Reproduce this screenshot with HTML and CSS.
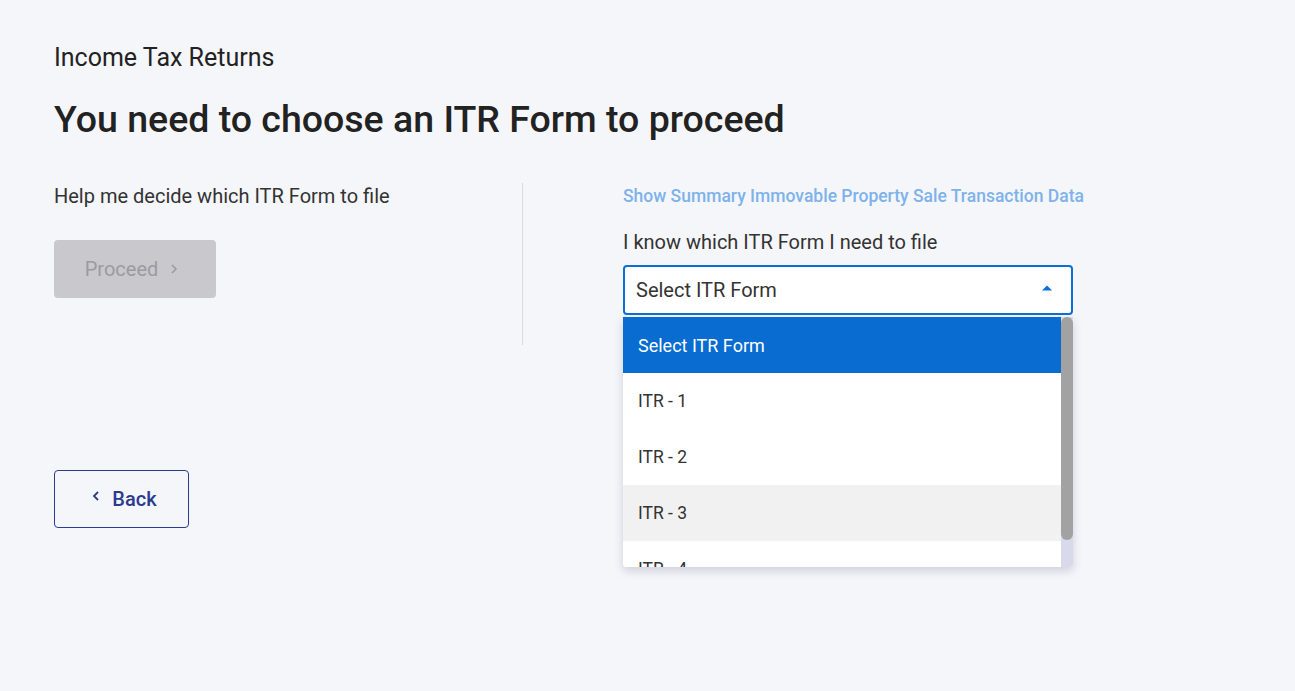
FILE: index.html
```html
<!DOCTYPE html>
<html lang="en">
<head>
<meta charset="utf-8">
<title>Income Tax Returns</title>
<link rel="stylesheet" href="styles.css">
</head>
<body>
<main class="page">
  <div class="crumb">Income Tax Returns</div>
  <h1 class="title">You need to choose an ITR Form to proceed</h1>
  <div class="choices">
    <section class="col-left">
      <p class="col-text">Help me decide which ITR Form to file</p>
      <button class="btn-proceed" disabled>Proceed <span class="chev">
        <svg width="8" height="12" viewBox="0 0 8 12"><path d="M2 2l4 4-4 4" fill="none" stroke="currentColor" stroke-width="1.6"/></svg>
      </span></button>
    </section>
    <section class="col-right">
      <a class="summary-link" href="#">Show Summary Immovable Property Sale Transaction Data</a>
      <label class="field-label">I know which ITR Form I need to file</label>
      <div class="select-wrap">
        <div class="select-box">
          <span>Select ITR Form</span>
          <svg class="caret" width="12" height="8" viewBox="0 0 12 8"><path d="M1 6.5L6 1.5L11 6.5Z" fill="#0a6fd8"/></svg>
        </div>
        <div class="menu">
          <ul class="options">
            <li class="opt selected">Select ITR Form</li>
            <li class="opt">ITR - 1</li>
            <li class="opt">ITR - 2</li>
            <li class="opt hover">ITR - 3</li>
            <li class="opt">ITR - 4</li>
          </ul>
          <div class="scroll"><div class="thumb"></div></div>
        </div>
      </div>
    </section>
  </div>
  <button class="btn-back"><span class="chev-back">
    <svg width="8" height="12" viewBox="0 0 8 12"><path d="M6 2L2 6l4 4" fill="none" stroke="currentColor" stroke-width="1.8"/></svg>
  </span>Back</button>
</main>
</body>
</html>
```

FILE: styles.css
```css
* { box-sizing: border-box; }
html, body { margin: 0; padding: 0; }
body {
  background: #f5f6fa;
  font-family: Roboto, "Liberation Sans", sans-serif;
  color: #2a2a2a;
  width: 1295px;
  height: 691px;
  overflow: hidden;
}
.page {
  padding: 43px 0 0 54px;
}
.crumb {
  font-size: 25px;
  line-height: 30px;
  color: #222;
}
.title {
  margin: 25px 0 0 0;
  font-size: 37.5px;
  line-height: 42px;
  font-weight: 500;
  color: #222;
}
.choices {
  display: flex;
  margin-top: 43px;
}
.col-left {
  width: 468px;
  padding-bottom: 47px;
}
.col-text {
  margin: 0;
  font-size: 20px;
  line-height: 26px;
  color: #333;
}
.btn-proceed {
  margin-top: 31px;
  width: 162px;
  height: 58px;
  border: none;
  border-radius: 4px;
  background: #c9c8cd;
  color: #9c9ba1;
  font-family: Roboto, "Liberation Sans", sans-serif;
  font-size: 20px;
  display: flex;
  align-items: center;
  justify-content: center;
  gap: 12px;
  padding: 0 7px 0 0;
}
.chev { display: flex; align-items: center; }
.col-right {
  border-left: 1px solid #d9d8ec;
  padding-left: 100px;
  display: flex;
  flex-direction: column;
  align-items: flex-start;
}
.summary-link {
  font-size: 17.5px;
  line-height: 26px;
  color: #7eb2ea;
  text-decoration: none;
  font-weight: 500;
}
.field-label {
  margin-top: 20px;
  font-size: 20px;
  line-height: 26px;
  color: #333;
}
.select-wrap {
  position: relative;
  margin-top: 10px;
  width: 450px;
}
.select-box {
  height: 50px;
  border: 2px solid #0a6fd8;
  border-radius: 4px;
  background: #fff;
  display: flex;
  align-items: center;
  justify-content: space-between;
  padding: 0 18px 0 11px;
  font-size: 20px;
  color: #333;
}
.caret { margin-top: -4px; }
.menu {
  position: absolute;
  top: 52px;
  left: 0;
  width: 450px;
  height: 250px;
  background: #fff;
  box-shadow: 0 4px 10px rgba(40, 40, 80, 0.18);
  display: flex;
  overflow: hidden;
  border-radius: 0 0 3px 3px;
  z-index: 5;
}
.options {
  list-style: none;
  margin: 0;
  padding: 0;
  flex: 1;
}
.opt {
  height: 56px;
  display: flex;
  align-items: center;
  padding-left: 15px;
  font-size: 17.5px;
  color: #333;
}
.opt.selected {
  background: #086cd0;
  color: #fff;
  font-size: 18px;
}
.opt.hover { background: #f1f1f1; }
.scroll {
  width: 12px;
  background: #d8d9ea;
  position: relative;
}
.thumb {
  height: 223px;
  background: #a2a2a2;
  border-radius: 6px;
}
.btn-back {
  margin-top: 125px;
  width: 135px;
  height: 58px;
  border: 1px solid #2c3b8f;
  border-radius: 4px;
  background: transparent;
  color: #2c3b8f;
  font-family: Roboto, "Liberation Sans", sans-serif;
  font-size: 20px;
  font-weight: 500;
  display: flex;
  align-items: center;
  justify-content: center;
  gap: 12px;
  padding: 0 0 0 6px;
}
.chev-back { display: flex; align-items: center; margin-top: -6px; }
```
